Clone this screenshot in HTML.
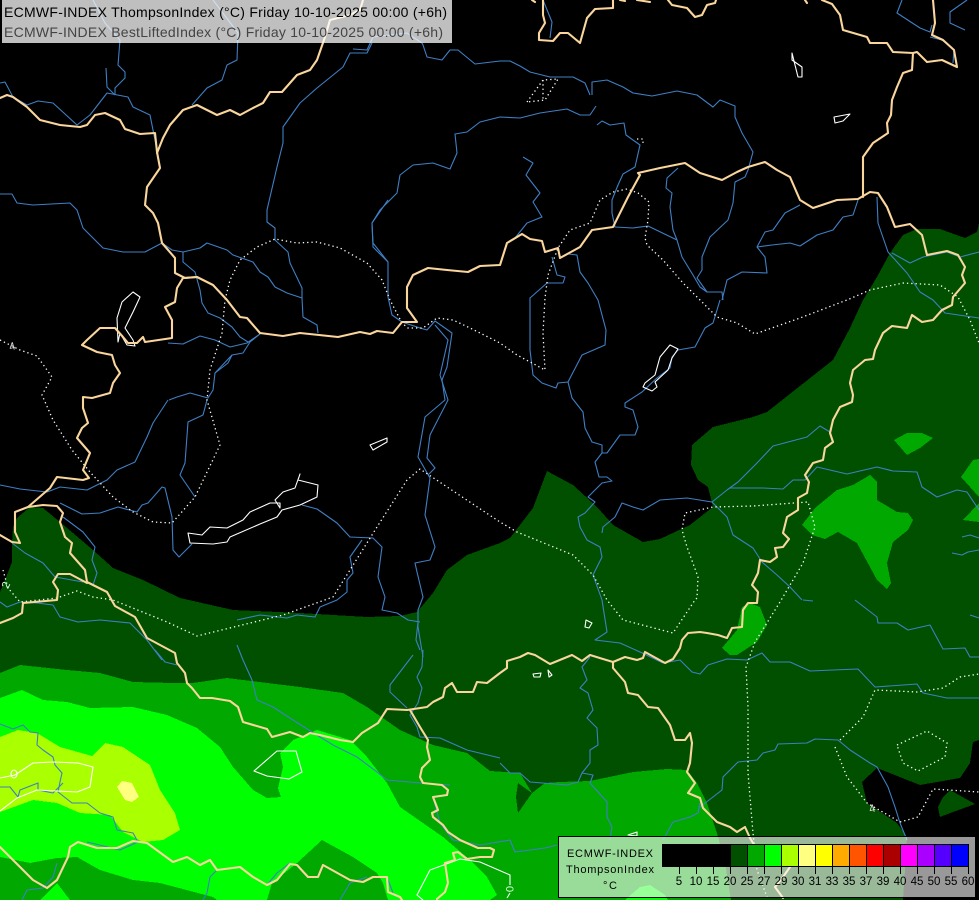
<!DOCTYPE html>
<html><head><meta charset="utf-8"><style>
html,body{margin:0;padding:0;background:#000;width:979px;height:900px;overflow:hidden}
svg{display:block}
text{font-family:"Liberation Sans",sans-serif}
</style></head><body>
<svg width="979" height="900" viewBox="0 0 979 900" xmlns="http://www.w3.org/2000/svg">
<rect width="979" height="900" fill="#000"/>
<g shape-rendering="crispEdges">
<polygon fill="#005000" points="0,592 5,580 12,562 12,543 13,527 17,518 30,507 43,508 60,522 93,550 113,568 143,580 180,598 233,610 300,613 367,617 400,616 417,612 433,593 447,570 467,555 500,543 510,538 533,508 547,471 573,485 597,507 613,525 643,542 660,539 690,525 713,507 708,487 698,480 691,465 692,445 713,427 753,417 767,412 833,360 850,328 863,300 877,277 890,253 903,235 917,229 940,229 965,238 977,232 979,223 979,900 0,900"/>
<polygon fill="#000" points="979,740 973,742 970,763 960,778 920,785 877,768 862,782 867,803 897,823 907,837 905,870 903,900 979,900"/>
<polygon fill="#005000" points="943,797 950,790 975,804 953,812 940,817 938,807"/>
<polygon fill="#00a800" points="0,673 20,665 67,670 100,673 133,682 173,683 193,683 227,678 300,687 343,693 367,707 400,730 433,745 467,753 490,771 520,773 532,793 545,783 560,782 590,781 633,772 667,769 687,770 697,783 707,803 717,833 725,863 731,900 0,900"/>
<polygon fill="#005000" points="518,783 532,793 518,813 516,797"/>
<polygon fill="#00ff00" points="0,698 22,690 43,700 67,702 90,708 133,707 167,715 197,728 220,747 233,767 253,790 267,798 281,797 278,788 283,767 280,753 293,740 317,730 350,740 367,757 387,783 400,807 443,837 470,860 487,877 497,895 490,900 388,900 383,883 377,873 353,857 322,840 297,863 272,883 267,900 217,900 213,897 160,883 133,880 100,870 77,857 57,858 30,863 0,857"/>
<polygon fill="#00ff00" points="40,900 57,883 70,900"/>
<polygon fill="#00ff00" points="625,900 640,887 650,885 665,895 668,900"/>
<polygon fill="#aaff00" points="0,737 18,730 37,733 60,747 92,756 105,743 123,747 150,765 160,790 175,813 180,830 163,840 143,842 123,832 110,815 80,813 57,803 33,800 0,812"/>
<polygon fill="#ffff80" points="117,787 122,781 132,783 139,797 132,802 125,800"/>
<polygon fill="#00a800" points="894,440 907,433 922,433 933,438 920,448 907,455"/>
<polygon fill="#00a800" points="802,525 815,508 837,490 853,485 870,475 877,482 877,500 897,512 908,513 913,520 908,530 893,542 887,563 891,583 887,589 877,580 857,543 838,532 825,539 812,535"/>
<polygon fill="#00a800" points="979,459 973,460 961,477 979,497"/>
<polygon fill="#00a800" points="979,503 963,520 979,522"/>
<polygon fill="#00a800" points="742,607 750,603 760,607 767,625 757,642 737,655 730,655 722,648 737,630"/>
</g>
<g fill="none" stroke="#3f7fc4" stroke-width="1.1" stroke-linejoin="round">
<polyline points="93,0 105,23 120,40 118,65 125,72 125,78 115,88 115,95"/>
<polyline points="106,68 107,87 115,95"/>
<polyline points="213,0 238,33 237,60 227,65 222,80 207,88 192,105"/>
<polyline points="0,83 5,82 13,97 27,105 38,101 53,103 77,125 90,115 107,93 128,97 133,107 150,115 153,130 157,150"/>
<polyline points="0,194 12,194 17,203 33,205 70,203 77,210 83,228 103,248 123,252 145,252 162,243 172,250 183,252 200,248 207,243 227,250 233,255 253,262 260,272 268,277 275,287 287,293 302,298 303,317 317,325 318,333"/>
<polyline points="372,43 367,53 350,53 343,67 317,88 300,103 283,127 283,143 277,167 267,210 267,222 275,228 275,240 288,252 290,263 302,288 302,298"/>
<polyline points="353,49 367,50 373,37 407,33 422,43 423,45 427,57 442,60 450,50 458,50 475,64 500,61 510,61 520,66 530,72 550,77 573,77 585,83 590,95"/>
<polyline points="592,95 592,82 607,80 623,87 633,93 652,96 677,91 697,95 713,107 720,100 735,106 735,117 742,133 753,152 748,170 745,177 735,182 733,203 728,220 710,237 702,257 702,270 697,278 707,292 722,292 723,300"/>
<polyline points="388,262 373,247 372,223 380,210 397,193 400,175 413,165 433,163 450,169 457,153 455,134 467,132 480,122 500,117 520,118 540,113 567,109 580,115 590,115 596,106"/>
<polyline points="388,200 372,223 373,243 388,262 388,297 392,315 402,322 420,328 427,330 435,321 452,333 447,367 442,380 445,400 425,417 418,457 430,478 425,515 435,547 430,560 415,563 417,572 423,597 418,610 418,627 423,657"/>
<polyline points="435,325 448,340 440,375 448,400 430,435 427,458 435,468 428,475"/>
<polyline points="597,125 602,121 610,125 624,123 626,135 640,145 635,167 623,174 618,185 612,200 612,213 615,227 633,228 648,226 677,240 682,257 693,275 700,287 707,292"/>
<polyline points="523,157 533,163 526,175 540,193 533,202 542,217 527,223 515,238"/>
<polyline points="678,168 667,178 666,188 672,193 670,207 673,230 677,240"/>
<polyline points="800,205 785,213 773,230 765,232 757,247 765,257 767,273 742,272 727,280 722,300"/>
<polyline points="858,200 853,215 843,217 833,230 817,235 800,246 790,243 772,245 757,247"/>
<polyline points="877,197 878,223 888,252 907,273 920,292 933,300 945,313 979,318"/>
<polyline points="892,253 910,263 923,257 947,252 960,257 979,252"/>
<polyline points="902,0 897,13 920,28 930,32 932,25"/>
<polyline points="967,0 950,12 950,23 965,30"/>
<polyline points="930,37 942,40 954,50 953,63"/>
<polyline points="543,0 552,22 550,38"/>
<polyline points="552,257 557,275 565,277 563,283 547,283 530,298 530,350 533,375 542,383 556,388 558,383 568,382 582,355 605,345 606,330 598,300 588,283 580,272 577,255 568,254"/>
<polyline points="568,382 572,398 583,412 585,428 592,442 602,445 602,453 595,462 599,477 607,477 612,481 602,483 588,497 595,502 585,513 578,517 580,527 587,540 600,547 602,557 593,575 602,600 607,632 595,640 620,643 640,652 663,663 680,660 692,672 700,674 708,665 727,659 747,660 762,653 770,662 790,662 810,671 833,670 858,669 875,687 917,684 923,693 947,698 979,698"/>
<polyline points="602,453 607,453 620,435 635,435 638,427 633,410 625,407 625,403 642,392 657,378 670,368 672,357 678,350 695,347 705,328 713,323 717,310 720,300"/>
<polyline points="602,533 603,527 615,517 622,503 633,507 643,510 660,500 687,498 712,502 727,490 738,482 757,463 773,446 807,437 820,426 830,432"/>
<polyline points="730,488 763,488 783,489 793,480 805,480 817,467 847,474 877,467 893,471 917,472 922,487 937,497 957,490 967,492 979,510"/>
<polyline points="712,502 727,517 733,535 753,548 762,562 777,575 790,587 802,600"/>
<polyline points="962,537 970,535 979,538"/><polyline points="952,553 962,555 968,552 979,550"/>
<polyline points="803,600 813,601"/><polyline points="970,615 979,618"/>
<polyline points="855,600 877,617 878,623 897,623 908,630 930,625 943,649 965,648 970,657 979,657"/>
<polyline points="590,657 582,667 587,680 580,688 588,693 593,710 587,718 597,728 598,745 590,750 590,763 582,773 593,775 590,783 607,802 607,817 612,827 610,840"/>
<polyline points="500,763 510,773 520,773 530,782 567,785 578,782 582,773"/>
<polyline points="700,807 722,790 723,777 738,762 757,760 763,753 775,750 778,744 807,743 815,739 838,740 850,750 870,763 877,767 888,787 895,807 900,823 907,840"/>
<polyline points="700,803 698,813 690,817 673,822 663,840"/>
<polyline points="168,400 153,423 147,437 135,462 117,470 107,480 87,490 60,487 47,492 20,489 0,485"/>
<polyline points="207,400 203,415 188,422 185,463 180,475 195,497"/>
<polyline points="60,503 82,514 100,513 118,507 137,512 142,505 148,503 162,487 165,488 172,517 173,550 179,557 192,544"/>
<polyline points="302,505 317,509 337,523 350,537 373,538 382,547 378,577 385,597 382,610 397,613 408,620 420,622"/>
<polyline points="362,540 350,557 353,573 347,580 347,592 337,600 320,607 315,617 297,615 287,618 260,615 237,620"/>
<polyline points="168,343 183,344 200,336 215,340 230,347 247,343 260,334 250,342 243,353 232,355 215,373 213,390 208,398 190,393 177,397 169,400"/>
<polyline points="183,252 183,262 195,272 200,290 202,303 208,313 220,318 232,327 240,337 248,342"/>
<polyline points="232,355 228,363 215,373"/>
<polyline points="63,517 83,532 95,547 92,560 97,573 93,585"/>
<polyline points="12,543 25,553 43,563 55,577 83,582"/>
<polyline points="0,602 7,607 20,602 37,603 53,605 60,617 78,622 100,620 130,623 147,640 162,660"/>
<polyline points="237,645 243,660 252,680 257,700 273,707 293,720 312,732 333,745 357,757 377,772 387,780 420,783 450,785"/>
<polyline points="155,650 165,662 177,665"/>
<polyline points="423,650 422,667 417,677 422,688 418,703 410,715 417,727 420,737 440,738 467,750 500,758"/>
<polyline points="413,655 390,685 390,692 407,708"/>
<polyline points="418,622 416,640 420,650"/>
<polyline points="0,724 13,729 23,725 30,732 38,733 37,745 43,750 53,757 55,765 62,773 60,782 58,792 72,803 87,803 100,813 113,817 117,830 133,833 138,842 120,850 87,842"/>
<polyline points="0,787 10,787 18,797 20,790 38,783 38,790 53,793 63,783"/>
<polyline points="57,863 53,877 43,888 27,890 22,900"/>
<polyline points="217,870 210,877 207,893 203,900"/>
<polyline points="290,863 277,873 267,885"/>
<polyline points="367,877 350,883 340,900"/>
<polyline points="387,877 393,893"/>
<polyline points="433,797 440,823 453,840 480,845 510,840 515,852 545,848 557,845"/>
</g>
<g fill="none" stroke="#ffffff" stroke-width="1.1" stroke-linejoin="round">
<polygon points="300,474 298,480 318,485 317,497 300,505 282,510 277,517 260,524 230,537 227,542 213,544 190,543 188,533 202,535 210,527 227,528 243,520 250,512 270,503 280,503 280,508 275,500 283,492 295,488"/>
<polygon points="370,445 387,438 387,442 373,450"/>
<polygon points="792,53 792,60 802,67 802,77 798,77 795,65"/>
<polygon points="834,117 850,114 843,121 835,123"/>
<polygon points="670,345 678,349 672,358 668,370 655,382 657,387 652,391 643,387 645,383 655,375 660,357"/>
<polygon points="133,292 140,297 133,312 125,328 133,340 135,346 127,345 120,333 118,342 117,318 122,302"/>
<polygon points="586,620 592,623 589,628 585,627"/>
<polygon points="533,674 541,673 540,677 534,677"/>
<polygon points="548,670 552,675 549,677"/>
<polygon points="628,835 637,832 637,836"/>
<polygon points="277,751 296,751 302,772 289,779 267,776 254,771"/>
<polyline points="423,900 417,895 430,870 460,859 480,862 510,875 510,885"/>
<polyline points="507,898 510,893"/>
<polyline points="0,778 15,775 33,763 53,762 78,763 93,767 90,787 77,792 37,790 17,798 0,811"/>
<ellipse cx="14" cy="774" rx="3" ry="4"/>
</g>
<g fill="none" stroke="#ffffff" stroke-width="1.3" stroke-dasharray="1.3 3">
<polyline points="0,340 20,350 37,356 52,377 42,395 53,420 72,450 90,472 113,497 133,512 153,522 172,523 195,497 220,445 207,400 210,370 222,333 225,300 230,280 240,260 257,247 275,239 297,243 317,242 340,248 367,263 382,280 390,300 402,323 408,328 423,328 437,318 453,320 470,328 500,343 517,355 545,370 543,333 545,298 548,275 558,248 570,230 590,223 600,200 613,192 627,189 638,193 649,202 648,220 645,238 647,245 663,260 683,283 700,300 717,317 737,323 755,334 800,318 847,300 870,290 903,283 940,285 958,297 970,320 979,343"/>
<polygon points="527,102 543,80 558,79 545,100"/>
<polyline points="543,80 543,100"/>
<polyline points="637,139 643,139 643,143"/>
<polyline points="3,570 8,588 20,602 57,598 77,591 93,597 113,600 167,622 197,636 283,615 333,597 377,527 407,480 420,469 500,522 517,532 573,555 593,575 607,600 623,620 673,633 695,600 697,598 698,577 687,547 682,530 685,513 713,507 753,506 808,502 815,527 803,563 780,602 755,642 746,667 748,707 748,773 753,833 757,870 767,897"/>
<polyline points="835,747 847,777 867,803 900,822 918,817 933,789 979,792"/>
<polyline points="840,740 863,717 875,690 917,692 943,688 960,677 979,674"/>
<polygon points="897,745 927,731 947,743 945,757 918,771 903,763"/>
</g>
<g fill="none" stroke="#fad59c" stroke-width="2.1" stroke-linejoin="round" stroke-linecap="round">
<polyline points="0,98 7,95 13,97 27,107 40,120 60,125 80,127 87,125 95,115 105,113 120,120 125,129 140,134 155,133 157,152 160,168 147,187 145,205 153,213 158,223 162,243 175,258 175,273 185,278 197,277 213,285 227,300 240,317 247,318 260,333 283,336 300,333 338,337 360,332 370,334 377,331 393,333 402,322 417,322 407,308 407,287 413,275 428,268 447,270 468,272 480,266 500,265 507,243 522,234 530,239 542,241 545,252 558,248 560,258 580,247 592,230 613,227 628,197 640,175 638,173 660,168 685,163 700,173 722,180 737,172 748,167 765,162 777,170 790,177 800,200 813,208 837,200 858,199 870,192 878,193 887,207 895,227 910,224 922,235 927,255 947,251 958,255 965,267 962,275 965,283 953,297 952,305 942,310 933,320 922,322 912,315 907,328 892,326 883,333 875,350 873,359 865,360 853,370 850,383 853,395 852,402 840,407 833,420 830,433 833,442 825,448 823,460 813,463 805,475 809,482 807,493 798,498 798,510 787,517 783,533 789,539 783,547 775,548 777,557 770,562 760,560 758,573 752,585 758,592 757,603 748,603 743,610 742,627 732,628 727,638 718,635 707,633 700,632 688,633 682,640 680,648 673,659 665,663 645,652 643,658 637,660 625,657 613,662 603,659 590,655 582,661 572,655 550,664 535,655 528,653 520,657 507,661 507,668 500,673 487,683 477,682 473,692 457,692 452,683 445,688 443,697 433,702 427,707 407,710 387,709 378,723 362,733 353,742 340,740 320,735 310,733 303,737 290,732 272,737 267,729 243,722 238,707 230,701 212,698 200,698 192,688 187,683 185,673 177,663 175,653 147,638 135,617 115,606 107,592 87,582 85,570 70,553 72,543 65,537 60,522 63,513 57,506 43,505 28,507 15,512 15,532 20,543 12,542 0,535"/>
<polyline points="28,507 50,488 57,477 83,480 89,478 83,470 90,453 77,438 82,428 88,423 83,408 83,397 92,398 110,393 113,383 120,373 115,365 112,355 97,352 82,345 87,340 100,328 115,328 123,337 128,343 137,343 143,337 145,342 172,338 172,320 165,307 175,302 177,288 183,278 197,277"/>
<polyline points="363,0 360,10 350,15 330,20 325,37 317,60 310,70 297,75 282,92 270,92 263,103 253,108 240,115 230,110 217,115 197,105 183,110 170,125 163,138 157,153"/>
<polyline points="613,662 613,668 625,682 628,693 638,695 648,707 658,708 670,725 675,740 685,740 690,733 692,743 690,763 687,772 695,783 688,793 700,798 703,808 717,822 730,827 737,832 745,827 750,838 753,843"/>
<polyline points="790,867 783,877 775,887 783,898"/>
<polyline points="0,847 10,857 33,880 47,888 57,880 68,857 70,847 78,842 97,848 117,848 133,841 147,843 173,862 187,857 200,865 210,860 217,870 240,867 253,877 267,885 277,880 290,864 297,865 308,877 318,877 323,865 350,880 363,882 373,877 387,877 388,892 400,897 402,900"/>
<polyline points="410,710 420,727 428,740 427,747 430,760 422,768 420,777 423,783 442,785 448,790 447,795 433,797 438,810 432,813 433,817 443,825 448,832 460,840 478,848 490,848 494,850 492,857 480,857 467,859 458,852 453,853 455,860 445,863 448,883 445,892 437,899"/>
<polyline points="0,623 13,618 22,613 23,603 57,600 58,590 53,582 58,574 70,574 87,583"/>
<polyline points="543,0 543,15 545,23 539,33 539,40 553,41 560,33 568,33 580,43 587,18 595,9 613,8 613,0"/>
<polyline points="668,0 672,5 687,8 695,17 702,15 707,5 715,3 716,0"/>
<polyline points="822,0 832,4 840,15 843,30 867,37 870,43 887,43 893,52 913,53 912,70 903,73 897,87 892,100 891,115 887,123 888,133 873,143 863,157 863,197"/>
<polyline points="913,53 917,52 927,62 942,60 957,67 954,50 943,40 932,35 935,23 933,0"/>
<polyline points="620,0 625,1"/><polyline points="637,0 650,2"/><polyline points="805,0 807,3"/><polyline points="532,0 535,2"/>
</g>
<g fill="#e6ffe6" font-size="11">
<text x="9" y="350" fill="#ddd" transform="rotate(-15 12 346)">4</text>
<text x="2" y="588" fill="#d8ffd8" transform="rotate(-65 6 584)">2</text>
<text x="869" y="812" fill="#ddd" transform="rotate(-15 873 808)">4</text>
<text x="507" y="893" fill="#d8ffd8" transform="rotate(90 510 889)">0</text>
</g>
<rect x="2" y="0" width="450" height="43" fill="#fff" fill-opacity=".75" shape-rendering="crispEdges"/>
<text x="4" y="17" font-size="14" fill="#000" textLength="443" lengthAdjust="spacing">ECMWF-INDEX ThompsonIndex (°C) Friday 10-10-2025 00:00 (+6h)</text>
<text x="4" y="37" font-size="14" fill="#444" textLength="439" lengthAdjust="spacing">ECMWF-INDEX BestLiftedIndex (°C) Friday 10-10-2025 00:00 (+6h)</text>
<g shape-rendering="crispEdges">
<rect x="558.5" y="836.5" width="417" height="61" fill="#fff" fill-opacity=".6" stroke="#000" stroke-width="1"/>
<rect x="662" y="844" width="68" height="23" fill="#000"/>
<rect x="679" y="844" width="17" height="23" fill="#000"/>
<rect x="730" y="844" width="17" height="23" fill="#005000"/>
<rect x="747" y="844" width="17" height="23" fill="#00a800"/>
<rect x="764" y="844" width="17" height="23" fill="#00ff00"/>
<rect x="781" y="844" width="17" height="23" fill="#aaff00"/>
<rect x="798" y="844" width="17" height="23" fill="#ffff80"/>
<rect x="815" y="844" width="17" height="23" fill="#ffff00"/>
<rect x="832" y="844" width="17" height="23" fill="#ffaa00"/>
<rect x="849" y="844" width="17" height="23" fill="#ff5500"/>
<rect x="866" y="844" width="17" height="23" fill="#ff0000"/>
<rect x="883" y="844" width="17" height="23" fill="#aa0000"/>
<rect x="900" y="844" width="17" height="23" fill="#ff00ff"/>
<rect x="917" y="844" width="17" height="23" fill="#aa00ff"/>
<rect x="934" y="844" width="17" height="23" fill="#5500ff"/>
<rect x="951" y="844" width="17" height="23" fill="#0000ff"/>
<path fill="none" stroke="#000" stroke-width="1" d="M662.5 844.5H968.5V866.5H662.5ZM679.5 844V874M696.5 844V874M713.5 844V874M730.5 844V874M747.5 844V874M764.5 844V874M781.5 844V874M798.5 844V874M815.5 844V874M832.5 844V874M849.5 844V874M866.5 844V874M883.5 844V874M900.5 844V874M917.5 844V874M934.5 844V874M951.5 844V874M968.5 844V874"/>
</g>
<g font-size="11" fill="#000">
<text x="567" y="857" textLength="86" lengthAdjust="spacing">ECMWF-INDEX</text>
<text x="566" y="873" textLength="88" lengthAdjust="spacing">ThompsonIndex</text>
<text x="603" y="889" textLength="14" lengthAdjust="spacing">°C</text>
</g>
<g font-size="11.5" fill="#000" text-anchor="middle">
<text x="679" y="885">5</text><text x="696" y="885">10</text><text x="713" y="885">15</text><text x="730" y="885">20</text><text x="747" y="885">25</text><text x="764" y="885">27</text><text x="781" y="885">29</text><text x="798" y="885">30</text><text x="815" y="885">31</text><text x="832" y="885">33</text><text x="849" y="885">35</text><text x="866" y="885">37</text><text x="883" y="885">39</text><text x="900" y="885">40</text><text x="917" y="885">45</text><text x="934" y="885">50</text><text x="951" y="885">55</text><text x="968" y="885">60</text>
</g>
</svg>
</body></html>
